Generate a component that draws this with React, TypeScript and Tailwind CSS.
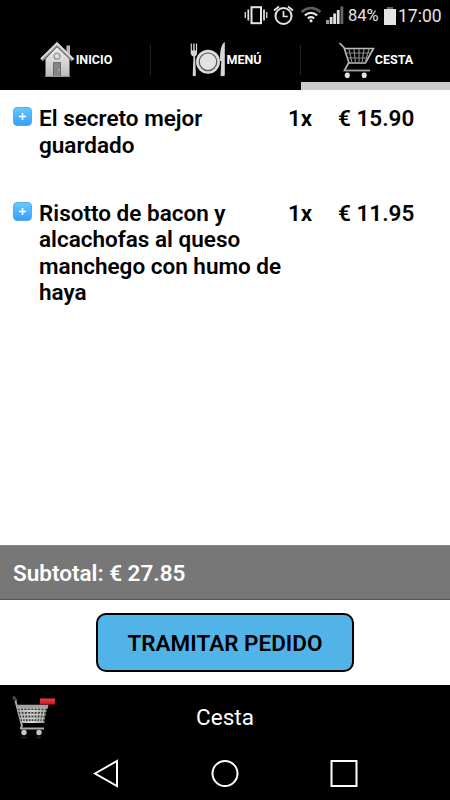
import type { ReactNode } from "react"

interface CartItem {
  name: string
  qty: number
  price: string
  spacing: string
}

const ITEMS: CartItem[] = [
  { name: "El secreto mejor guardado", qty: 1, price: "15.90", spacing: "mb-[41.5px]" },
  { name: "Risotto de bacon y alcachofas al queso manchego con humo de haya", qty: 1, price: "11.95", spacing: "" },
]

function StatusIcons() {
  return (
    <svg width="102" height="32" viewBox="243 0 102 32" className="shrink-0">
      {/* Vibrate */}
      <rect x="251.5" y="7.2" width="9.5" height="16" fill="none" stroke="#e4e4e4" strokeWidth="2" />
      <path d="M248.3 9.5v11M264 9.5v11" stroke="#e4e4e4" strokeWidth="1.7" />
      <path d="M245.3 12v6M266.7 12v6" stroke="#cfcfcf" strokeWidth="1.4" />
      {/* Alarm */}
      <circle cx="283.5" cy="16" r="8" fill="none" stroke="#e4e4e4" strokeWidth="2" />
      <path d="M283.5 11v5.5h4.3" fill="none" stroke="#e4e4e4" strokeWidth="1.7" />
      <path d="M274 10.5l5-4M293 10.5l-5-4" stroke="#e4e4e4" strokeWidth="1.9" />
      {/* Wifi */}
      <path d="M301.5 12q9.5-7.8 19 0" fill="none" stroke="#5d5d5d" strokeWidth="2.4" />
      <path d="M304.8 15.3q6.2-5 12.4 0" fill="none" stroke="#e4e4e4" strokeWidth="2.2" />
      <path d="M307.8 18.4q3.2-2.4 6.4 0" fill="none" stroke="#e4e4e4" strokeWidth="2.1" />
      <circle cx="311" cy="20.8" r="1.6" fill="#e4e4e4" />
      {/* Signal */}
      <path d="M326 20h3v4h-3z" fill="#999" />
      <path d="M329.7 17h2.8v7h-2.8zM333.2 13.5h2.8v10.5h-2.8zM336.8 10h2.8v14h-2.8z" fill="#e0e0e0" />
      <path d="M340.5 6.5h2.8v17.5h-2.8z" fill="#686868" />
    </svg>
  )
}

function HouseIcon() {
  return (
    <svg width="36" height="38" viewBox="0 0 36 38" className="shrink-0">
      <defs>
        <linearGradient id="wall" x1="0" x2="0" y1="0" y2="1">
          <stop offset="0" stopColor="#f0f0f0" />
          <stop offset="1" stopColor="#bcbcbc" />
        </linearGradient>
      </defs>
      <path d="M26.5 4.5h3.5v12h-3.5z" fill="#b8b8b8" />
      <path d="M5.5 18L17 6l12.5 12v17.5h-24z" fill="url(#wall)" />
      <path d="M1.5 19L17 3.7l16 15.5" fill="none" stroke="#858585" strokeWidth="3.8" />
      <path d="M1.2 18L17 2.5l16.500 16" fill="none" stroke="#d8d8d8" strokeWidth="2.3" />
      <circle cx="17" cy="15.2" r="3" fill="#ddd" stroke="#999" strokeWidth="1.3" />
      <path d="M13.5 21.5h7v14h-7z" fill="#858585" stroke="#6c6c6c" />
      <circle cx="19" cy="29" r=".7" fill="#ddd" />
      <path d="M5 35.300h25" stroke="#a0a0a0" strokeWidth="1" />
    </svg>
  )
}

function PlateIcon() {
  return (
    <svg width="36" height="38" viewBox="0 0 36 38" className="shrink-0">
      <circle cx="18" cy="20.800" r="12" fill="#dcdcdc" />
      <circle cx="18" cy="20.800" r="8.800" fill="#e2e2e2" stroke="#555" strokeWidth="1.200" />
      <path d="M.7 2.500h1.200v7h1.300v-7h1.400v7h1.300v-7h1.200v9q0 3-2 4l.8 19q-1.500 1.500-3.200 0l.8-19q-2.800-1-2.800-4z" fill="#d7d7d7" />
      <path d="M34.800 1c-3.500 1.800-5 9-4.700 19h1.200l-.8 14.500q1.800 1.500 4.300 0z" fill="#d7d7d7" />
    </svg>
  )
}

function CartIcon() {
  return (
    <svg width="36" height="38" viewBox="0 0 36 38" className="shrink-0">
      <path d="M.5 2l4.500 4.500 5 15.500h16.500L34.500 7.500H5.500M9.500 22L5.500 29.500" fill="none" stroke="#bcbcbc" strokeWidth="1.600" />
      <path d="M7 12h25M8.500 17h20.500M10 8l3 14M15 8l1.500 14M20 8v14M25 8l-2 14M30 8l-4 14" fill="none" stroke="#898989" strokeWidth="1.200" />
      <path d="M4.500 29.500H31" stroke="#a2a2a2" strokeWidth="1.800" />
      <ellipse cx="8.300" cy="34.200" rx="2.500" ry="2.800" fill="#e6e6e6" />
      <ellipse cx="25.200" cy="34.200" rx="2.500" ry="2.800" fill="#e6e6e6" />
    </svg>
  )
}

function BasketIcon() {
  return (
    <svg width="46" height="46" viewBox="0 0 46 46" className="shrink-0">
      <defs>
        <linearGradient id="metal" x1="0" x2="1" y1="0" y2="0">
          <stop offset="0" stopColor="#999" />
          <stop offset=".5" stopColor="#e2e6e2" />
          <stop offset="1" stopColor="#888" />
        </linearGradient>
        <linearGradient id="red" x1="0" x2="0" y1="0" y2="1">
          <stop offset="0" stopColor="#f23f49" />
          <stop offset="1" stopColor="#c60f1c" />
        </linearGradient>
      </defs>
      <path d="M2 2.500l2 3" stroke="#574540" strokeWidth="3" strokeLinecap="round" />
      <path d="M3.500 6l6.500 25-1.500 3" fill="none" stroke="#b5b5b5" strokeWidth="1.800" />
      <path d="M5 11h30.500L32 27H9z" fill="#3c3e3c" />
      <path d="M4 9.800h32.500l-.8 4H5z" fill="#a3a3a3" />
      <path d="M6 16h28.500M7 19.700h27M8 23.400h25M8.500 27h24" stroke="url(#metal)" strokeWidth="1.800" />
      <path d="M8 13l3 14M11.500 13l2 14M15 13l1.500 14M18.500 13l.7 14M22 13v14M25.500 13l-.7 14M29 13l-1.500 14M32.500 13l-2.500 14" stroke="#bcc0bc" strokeWidth="1.300" />
      <path d="M8.500 33.500h23.500" stroke="#aaa" strokeWidth="2" />
      <circle cx="12" cy="37.500" r="2.700" fill="#c4c4c4" />
      <circle cx="27" cy="37.500" r="2.700" fill="#c4c4c4" />
      <ellipse cx="12" cy="42.500" rx="2.800" ry="1" fill="#242424" />
      <ellipse cx="27" cy="42.500" rx="2.800" ry="1" fill="#242424" />
      <path d="M28 3.500h15v6H28z" fill="url(#red)" />
    </svg>
  )
}

function Tab({ label, icon, active }: { label: string; icon: ReactNode; active?: boolean }) {
  return (
    <div className="flex w-[150px] shrink-0 flex-col">
      <div className="flex h-[50px] items-center justify-center pt-1.5 pl-[2px]">
        {icon}
        <span className="text-[12.5px] leading-[38px] font-bold">{label}</span>
      </div>
      <div className={`h-2 ${active ? "ml-px bg-[#cccccc]" : "bg-black"}`} />
    </div>
  )
}

function Divider() {
  return <div className="mt-[13px] -mr-px h-[30px] w-px shrink-0 bg-[#222222]" />
}

export default function App() {
  return (
    <div className="flex h-[800px] w-[450px] flex-col overflow-hidden bg-white font-[Roboto,sans-serif] text-black">
      {/* Status bar */}
      <div className="flex h-8 shrink-0 items-center bg-black pl-[243px] text-[#e4e4e4]">
        <StatusIcons />
        <span className="ml-[3px] w-9 text-[16.5px]">84%</span>
        <svg width="12" height="18" viewBox="0 0 12 18" className="shrink-0">
          <path d="M3 0h6v2H3z" fill="#666" />
          <path d="M0 2h12v16H0z" fill="#e4e4e4" />
        </svg>
        <span className="ml-[2px] text-[17.5px]">17:00</span>
      </div>

      {/* Tabs */}
      <div className="flex h-[58px] shrink-0 bg-black text-white">
        <Tab label="INICIO" icon={<HouseIcon />} />
        <Divider />
        <Tab label="MENÚ" icon={<PlateIcon />} />
        <Divider />
        <Tab label="CESTA" icon={<CartIcon />} active />
      </div>

      {/* Cart items */}
      <div className="flex-1 pt-[15px] text-[22.5px] leading-[26.6px] font-semibold">
        {ITEMS.map(item => (
          <div key={item.name} className={`flex items-start pl-[13px] ${item.spacing}`}>
            <div className="mt-[2px] flex size-[19px] shrink-0 items-center justify-center rounded-[4px] border border-[#58a9e8] bg-linear-to-b from-[#62cbff] to-[#399dfb]">
              <svg width="7" height="7" viewBox="0 0 7 7">
                <path d="M3.500 0v7M0 3.500h7" stroke="white" strokeWidth="1.500" />
              </svg>
            </div>
            <div className="ml-[7px] w-[249px] shrink-0 pr-1">{item.name}</div>
            <div className="w-[50px] shrink-0">{item.qty}x</div>
            <div className="whitespace-nowrap">€ {item.price}</div>
          </div>
        ))}
      </div>

      {/* Subtotal */}
      <div className="flex h-[55px] shrink-0 items-center border-y border-t-[#868686] border-b-[#555555] bg-[#777777] pt-[2px] pl-[13px] text-[22.5px] font-semibold text-white">
        Subtotal: € 27.85
      </div>
      <div className="flex h-[85px] shrink-0 items-center justify-center">
        <button className="h-[59px] w-[258px] rounded-[10px] border-2 border-black bg-[#51b3e7] pt-[2px] text-[22.5px] font-semibold">
          TRAMITAR PEDIDO
        </button>
      </div>

      {/* Title bar */}
      <div className="flex h-[65px] shrink-0 items-center bg-black pl-3 text-white">
        <BasketIcon />
        <span className="flex-1 pr-[58px] text-center text-[22.5px]">Cesta</span>
      </div>

      {/* Android navigation */}
      <div className="flex h-[50px] shrink-0 items-start justify-between bg-black px-[92px] pt-[9px]">
        <svg width="28" height="30" viewBox="0 0 28 30" fill="none" stroke="white" strokeWidth="2">
          <path d="M3 14.500L25 2v25z" />
        </svg>
        <svg width="28" height="30" viewBox="0 0 28 30" fill="none" stroke="white" strokeWidth="2">
          <circle cx="14" cy="14.500" r="12.500" />
        </svg>
        <svg width="28" height="30" viewBox="0 0 28 30" fill="none" stroke="white" strokeWidth="2">
          <path d="M1.500 2h25v25h-25z" />
        </svg>
      </div>
    </div>
  )
}
